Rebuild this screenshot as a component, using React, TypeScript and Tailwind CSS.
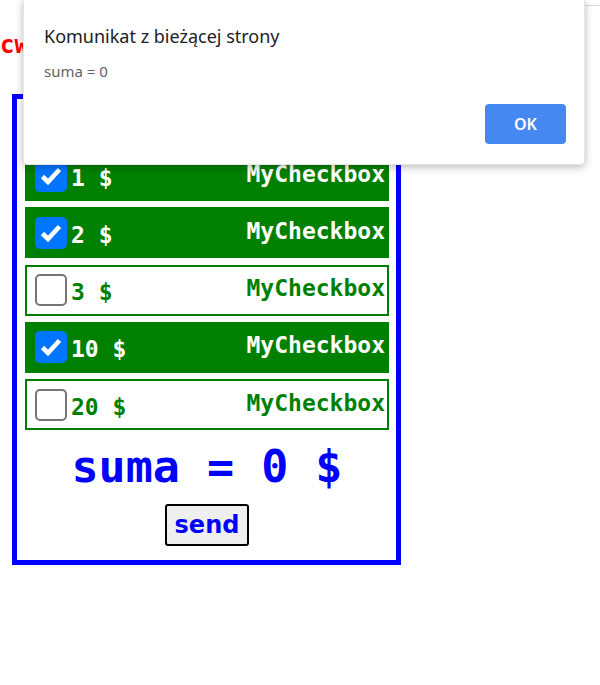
import React from "react";

type Item = { value: number; checked: boolean };

const items: Item[] = [
  { value: 1, checked: true },
  { value: 2, checked: true },
  { value: 3, checked: false },
  { value: 10, checked: true },
  { value: 20, checked: false },
];

function Box({ checked }: { checked: boolean }) {
  if (checked) {
    return (
      <div className="w-[32px] h-[32px] rounded-[5px] bg-[#0075ff] flex items-center justify-center shrink-0">
        <svg width="32" height="32" viewBox="0 0 32 32">
          <path d="M7.5 16.5 L13 22 L24.5 9.5" fill="none" stroke="#ffffff" strokeWidth="4.6" />
        </svg>
      </div>
    );
  }
  return <div className="w-[32px] h-[32px] rounded-[5px] bg-white border-[2px] border-[#767676] shrink-0" />;
}

function Row({ item }: { item: Item }) {
  const on = item.checked;
  return (
    <div
      className={
        "h-[51px] border-[2px] border-[#008000] flex items-center pl-[8px] pr-[2px] font-bold text-[23px] leading-[28px] " +
        (on ? "bg-[#008000] text-white" : "bg-white text-[#008000]")
      }
      style={{ fontFamily: '"DejaVu Sans Mono", monospace' }}
    >
      <Box checked={on} />
      <span className="ml-[4px] mt-[4px]">{item.value} $</span>
      <span className="ml-auto mb-[4px]">MyCheckbox</span>
    </div>
  );
}

export default function App() {
  return (
    <div className="relative w-[600px] h-[685px] bg-white overflow-hidden">
      <div className="h-[94px] pt-[31px]">
        <div
          className="text-[24px] leading-[28px] font-bold text-[#ff0000] whitespace-nowrap"
          style={{ fontFamily: '"DejaVu Sans Mono", monospace' }}
        >
          cw
        </div>
      </div>

      <div className="ml-[12px] w-[389px] border-[5px] border-[#0000ff] pt-[51px] pl-[8px] pr-[7px] pb-[14px] flex flex-col">
        <div className="flex flex-col gap-[6.3px]">
          {items.map((it) => (
            <Row key={it.value} item={it} />
          ))}
        </div>
        <div
          className="mt-[11px] text-center text-[45px] leading-[52px] font-bold text-[#0000ff] whitespace-nowrap"
          style={{ fontFamily: '"DejaVu Sans Mono", monospace' }}
        >
          suma = 0 $
        </div>
        <div className="mt-[11px] flex justify-center">
          <button
            className="w-[84px] h-[42px] bg-[#efefef] border-[2px] border-black rounded-[3px] text-[24px] font-bold text-[#0000ff] leading-none flex items-center justify-center"
            style={{ fontFamily: '"DejaVu Sans", sans-serif' }}
          >
            send
          </button>
        </div>
      </div>

      <div className="absolute top-[5px] right-0 w-[15px] h-px bg-[#dcdcdc]" />

      <div
        className="absolute left-[23px] top-0 w-[562px] h-[165px] bg-white rounded-b-[4px] border border-t-0 border-[#e6e6e6] shadow-[0_2px_8px_rgba(0,0,0,0.28)] pl-[20px] pr-[18px] pt-[24px] flex flex-col"
        style={{ fontFamily: '"Noto Sans", sans-serif' }}
      >
        <div className="text-[18px] leading-[24px] text-[#202124]">Komunikat z bieżącej strony</div>
        <div className="mt-[13px] text-[15px] leading-[20px] text-[#5f6368]">suma = 0</div>
        <div className="mt-[23px] flex justify-end">
          <button className="w-[81px] h-[40px] rounded-[4px] bg-[#4688f1] text-white text-[16px] font-semibold">
            OK
          </button>
        </div>
      </div>
    </div>
  );
}
